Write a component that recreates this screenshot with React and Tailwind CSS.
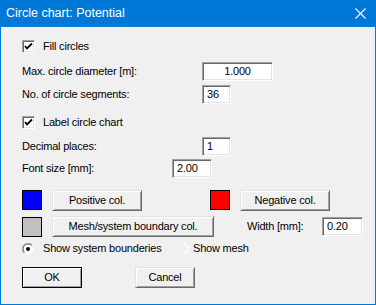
import React from "react";

const sunken =
  "border border-t-[#a0a0a0] border-l-[#a0a0a0] border-r-white border-b-white shadow-[inset_1px_1px_0_#696969,inset_-1px_-1px_0_#e3e3e3]";
const raised =
  "border border-t-[#e3e3e3] border-l-[#e3e3e3] border-r-[#696969] border-b-[#696969] shadow-[inset_1px_1px_0_#fff,inset_-1px_-1px_0_#a0a0a0]";

const Field = ({ value, className = "", center }) => (
  <div
    className={`h-[19px] bg-white flex items-center ${center ? "justify-center" : "pl-[4px]"} ${sunken} ${className}`}
  >
    {value}
  </div>
);

const Check = ({ label }) => (
  <div className="flex items-center h-[18px]">
    <div className={`w-[13px] h-[13px] bg-white flex items-center justify-center ${sunken}`}>
      <svg width="9" height="9" viewBox="0 0 9 9">
        <path d="M1 4 L3 6.5 L8 1.5" stroke="#000" strokeWidth="1.8" fill="none" />
      </svg>
    </div>
    <span className="ml-[8px]">{label}</span>
  </div>
);

const Btn = ({ children, className = "", def }) => (
  <div
    className={`h-[21px] flex items-center justify-center bg-[#f0f0f0] ${def ? "outline outline-1 outline-black -outline-offset-1" : ""} ${raised} ${className}`}
  >
    {children}
  </div>
);

const Radio = ({ on }) => (
  <svg width="12" height="12" viewBox="0 0 12 12">
    {on ? (
      <>
        <circle cx="6" cy="6" r="5.5" fill="#fff" />
        <path d="M1.8 10.2 A5.5 5.5 0 0 1 10.2 1.8" stroke="#a0a0a0" fill="none" />
        <path d="M2.5 9.5 A4.5 4.5 0 0 1 9.5 2.5" stroke="#696969" fill="none" />
        <circle cx="6" cy="6" r="2" fill="#000" />
      </>
    ) : (
      <path d="M6 1 A5 5 0 0 1 6 11" stroke="#fff" strokeWidth="1.5" fill="none" />
    )}
  </svg>
);

export default function App() {
  return (
    <div className="w-[376px] h-[305px] flex flex-col bg-[#0078d7] font-['Liberation_Sans',Arial,sans-serif]">
      <div className="h-[27px] flex items-center justify-between pl-[6px] pr-[10px] text-white text-[12.5px]">
        <span>Circle chart: Potential</span>
        <svg width="11" height="11" viewBox="0 0 11 11">
          <path d="M0.5 0.5 L10.5 10.5 M10.5 0.5 L0.5 10.5" stroke="#fff" strokeWidth="1.1" />
        </svg>
      </div>
      <div className="flex-1 mx-[1px] mb-[1px] bg-[#f0f0f0] pl-[21px] text-black text-[11px] tracking-[-0.2px]">
        <div className="mt-[10px]">
          <Check label="Fill circles" />
        </div>
        <div className="mt-[7px] flex items-center h-[19px]">
          <span className="w-[180px]">Max. circle diameter [m]:</span>
          <Field value="1.000" className="w-[71px]" center />
        </div>
        <div className="mt-[4px] flex items-center h-[19px]">
          <span className="w-[180px]">No. of circle segments:</span>
          <Field value="36" className="w-[29px]" />
        </div>
        <div className="mt-[9px]">
          <Check label="Label circle chart" />
        </div>
        <div className="mt-[6px] flex items-center h-[19px]">
          <span className="w-[180px]">Decimal places:</span>
          <Field value="1" className="w-[29px]" />
        </div>
        <div className="mt-[3px] flex items-center h-[19px]">
          <span className="w-[150px]">Font size [mm]:</span>
          <Field value="2.00" className="w-[40px]" />
        </div>
        <div className="mt-[11px] flex items-center h-[22px]">
          <div className="w-[20px] h-[20px] bg-[#0000ff] border border-black" />
          <Btn className="ml-[10px] w-[90px]">Positive col.</Btn>
          <div className="ml-[68px] w-[20px] h-[20px] bg-[#ff0000] border border-black" />
          <Btn className="ml-[10px] w-[90px]">Negative col.</Btn>
        </div>
        <div className="mt-[5px] flex items-center h-[21px]">
          <div className="w-[20px] h-[20px] bg-[#c0c0c0] border border-black" />
          <Btn className="ml-[10px] w-[162px] h-[20px]">Mesh/system boundary col.</Btn>
          <span className="ml-[33px] w-[75px]">Width [mm]:</span>
          <Field value="0.20" className="w-[41px]" />
        </div>
        <div className="mt-[3px] flex items-center h-[17px]">
          <div className="w-[155px] flex items-center">
            <Radio on />
            <span className="ml-[9px]">Show system bounderies</span>
          </div>
          <Radio />
          <span className="ml-[4px]">Show mesh</span>
        </div>
        <div className="mt-[10px] flex items-center">
          <Btn className="w-[60px] h-[20px]" def>OK</Btn>
          <Btn className="ml-[53px] w-[60px] h-[20px]">Cancel</Btn>
        </div>
      </div>
    </div>
  );
}
